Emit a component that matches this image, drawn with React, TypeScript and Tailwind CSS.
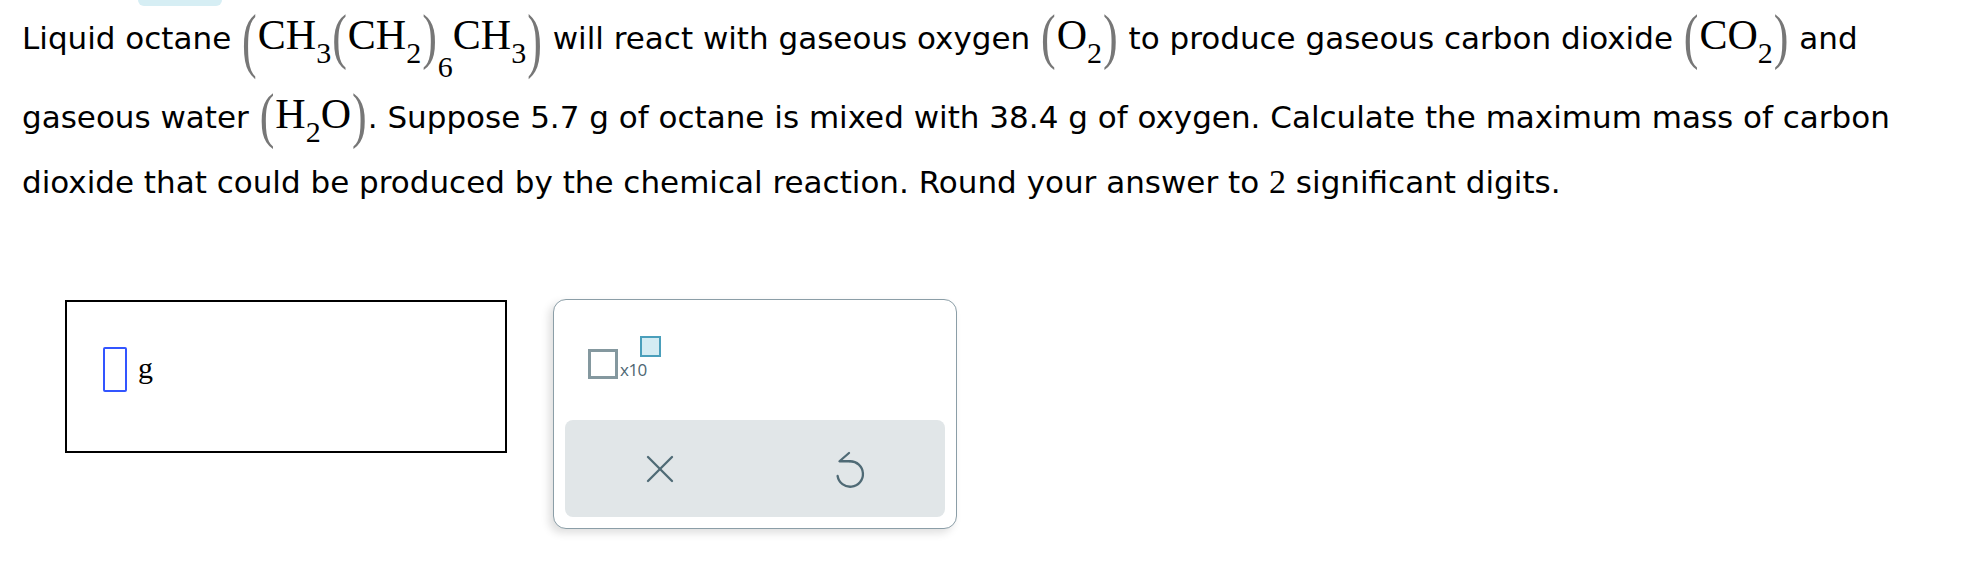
import React from 'react';

// stretched delimiter, drawn as a scaled text glyph
function Paren({ ch, tall }: { ch: string; tall?: boolean }) {
  return (
    <span
      className={
        tall
          ? "inline-block mx-[1px] font-['Liberation_Serif'] text-[44px] leading-none text-[#777] scale-y-[1.65] align-[-6px]"
          : "inline-block mx-[1px] font-['Liberation_Serif'] text-[44px] leading-none text-[#777] scale-y-[1.4] align-[-2px]"
      }
    >
      {ch}
    </span>
  );
}

function Sub({ children, low }: { children: React.ReactNode; low?: boolean }) {
  return (
    <span className={low ? 'align-[-28px] text-[30px] leading-none' : 'align-[-14px] text-[30px] leading-none'}>
      {children}
    </span>
  );
}

function Formula({ children }: { children: React.ReactNode }) {
  return <span className="font-['Liberation_Serif'] text-[42px] leading-none">{children}</span>;
}

function ExponentIcon() {
  return (
    <div className="flex items-end h-[43px]">
      <div className="w-[30px] h-[30px] border-[3px] border-[#84989f] bg-white" />
      <span className="ml-[2px] mb-[1px] font-['Open_Sans'] text-[17px] leading-none text-[#4d6672] tracking-[-0.5px]">
        x10
      </span>
      <div className="self-start -ml-[7px] w-[21px] h-[21px] border-2 border-[#4a9fbb] bg-[#d4ecf3]" />
    </div>
  );
}

function UndoIcon() {
  return (
    <svg width="30" height="40" viewBox="0 0 30 40" fill="none" stroke="#4f6a75" strokeWidth="2.3" strokeLinecap="round" strokeLinejoin="round">
      <path d="M14 4 L4.5 12.25 L15 12.25" />
      <path d="M15 12.25 A12.75 12.75 0 1 1 2.6 27" />
    </svg>
  );
}

function CloseIcon() {
  return (
    <svg width="28" height="28" viewBox="0 0 28 28" fill="none" stroke="#4f6a75" strokeWidth="2.3" strokeLinecap="round">
      <path d="M2 2 L26 26" />
      <path d="M26 2 L2 26" />
    </svg>
  );
}

export default function App() {
  return (
    <div className="w-[1982px] h-[568px] bg-white overflow-hidden font-['DejaVu_Sans',sans-serif] text-black">
      {/* tab stub at the top */}
      <div className="ml-[138px] w-[84px] h-[6px] rounded-b-[10px] bg-[#d6eef4]" />

      {/* question text */}
      <div className="pl-[22px] text-[31px] whitespace-nowrap">
        <div className="h-[79px] leading-[65px]">
          Liquid octane{' '}
          <Formula>
            <Paren ch="(" tall />
            CH<Sub>3</Sub>
            <Paren ch="(" />
            CH<Sub>2</Sub>
            <Paren ch=")" />
            <Sub low>6</Sub>
            CH<Sub>3</Sub>
            <Paren ch=")" tall />
          </Formula>{' '}
          will react with gaseous oxygen{' '}
          <Formula>
            <Paren ch="(" />
            O<Sub>2</Sub>
            <Paren ch=")" />
          </Formula>{' '}
          to produce gaseous carbon dioxide{' '}
          <Formula>
            <Paren ch="(" />
            CO<Sub>2</Sub>
            <Paren ch=")" />
          </Formula>{' '}
          and
        </div>
        <div className="h-[65px] leading-[65px]">
          gaseous water{' '}
          <Formula>
            <Paren ch="(" />
            H<Sub>2</Sub>O
            <Paren ch=")" />
          </Formula>
          . Suppose 5.7 g of octane is mixed with 38.4 g of oxygen. Calculate the maximum mass of carbon
        </div>
        <div className="h-[65px] leading-[65px]">
          dioxide that could be produced by the chemical reaction. Round your answer to{' '}
          <span className="font-['Liberation_Serif'] text-[34px] leading-none">2</span> significant digits.
        </div>
      </div>

      {/* answer area */}
      <div className="flex items-start gap-[46px] pl-[65px] mt-[84px]">
        <div className="mt-px w-[442px] h-[153px] border-2 border-black pl-[36px] pt-[45px]">
          <div className="flex items-end gap-[11px]">
            <div className="w-[24px] h-[45px] border-2 border-[#3355ff] rounded-[2px]" />
            <span className="font-['Liberation_Serif'] text-[30px] leading-none mb-[9px]">g</span>
          </div>
        </div>

        <div className="w-[404px] h-[230px] rounded-[13px] border-[1.5px] border-[#8b9ea7] bg-white shadow-[-4px_4px_9px_rgba(0,0,0,0.13)] px-[11px] pb-[11px] flex flex-col">
          <div className="pl-[23px] pt-[36px] flex-1">
            <ExponentIcon />
          </div>
          <div className="h-[97px] rounded-[8px] bg-[#e1e6e8] grid grid-cols-2 items-center justify-items-center">
            <CloseIcon />
            <UndoIcon />
          </div>
        </div>
      </div>
    </div>
  );
}
